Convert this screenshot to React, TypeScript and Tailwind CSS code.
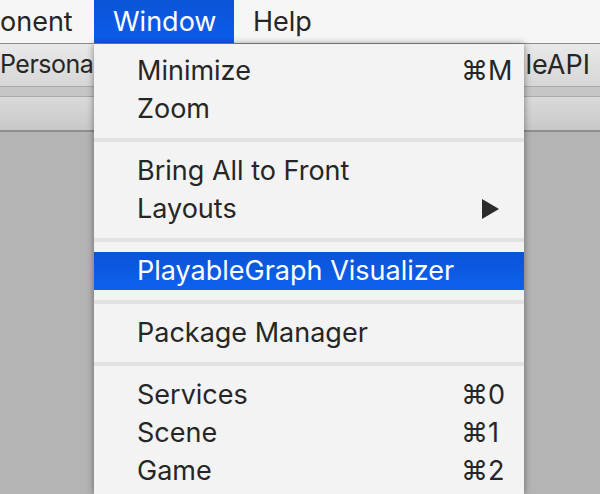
type Item =
  | { kind: "item"; label: string; shortcut?: string; submenu?: boolean; active?: boolean }
  | { kind: "sep" };

const menu: Item[] = [
  { kind: "item", label: "Minimize", shortcut: "⌘M" },
  { kind: "item", label: "Zoom" },
  { kind: "sep" },
  { kind: "item", label: "Bring All to Front" },
  { kind: "item", label: "Layouts", submenu: true },
  { kind: "sep" },
  { kind: "item", label: "PlayableGraph Visualizer", active: true },
  { kind: "sep" },
  { kind: "item", label: "Package Manager" },
  { kind: "sep" },
  { kind: "item", label: "Services", shortcut: "⌘0" },
  { kind: "item", label: "Scene", shortcut: "⌘1" },
  { kind: "item", label: "Game", shortcut: "⌘2" },
];

function MenuRow({ item }: { item: Item }) {
  if (item.kind === "sep") {
    return <div className="my-[10px] h-[4px] bg-[#e2e2e2]" />;
  }
  return (
    <div
      className={
        item.active
          ? "h-[38px] leading-[38px] flex items-center pl-[43px] pr-[15px] bg-gradient-to-b from-[#0a53d6] to-[#0e61ee] text-white"
          : "h-[38px] leading-[38px] flex items-center pl-[43px] pr-[15px]"
      }
    >
      <span className="flex-1 whitespace-nowrap">{item.label}</span>
      {item.shortcut && (
        <span className="w-[48px] whitespace-nowrap font-['Inter','DejaVu_Sans',sans-serif]">{item.shortcut}</span>
      )}
      {item.submenu && (
        <svg width="17" height="20" viewBox="0 0 17 20" className="mr-[10px]">
          <path d="M0 0 L17 10 L0 20 Z" fill="#2b2b2b" />
        </svg>
      )}
    </div>
  );
}

export default function App() {
  return (
    <div className="w-[600px] h-[494px] overflow-hidden relative flex flex-col bg-[#b4b4b4] font-['Inter',sans-serif] text-[27px] text-[#262626]">
      {/* system menu bar */}
      <div className="h-[44px] shrink-0 flex items-stretch bg-[#f6f6f6] border-b border-[#8c8c8c] leading-none">
        <span className="flex items-center w-[94px]">onent</span>
        <span className="flex items-center w-[140px] pl-[19px] bg-gradient-to-b from-[#0a54d8] to-[#0c5deb] text-white">
          Window
        </span>
        <span className="flex items-center pl-[19px]">Help</span>
      </div>

      {/* editor chrome behind the menu */}
      <div className="h-[42px] shrink-0 flex items-center justify-between bg-gradient-to-b from-[#e9e9e9] to-[#d6d6d6] leading-none">
        <span className="-mt-[2px] text-[25px] tracking-[-0.5px]">Personal</span>
        <span className="pr-[10px] -mt-[2px] whitespace-nowrap">leAPI</span>
      </div>
      <div className="h-[1px] shrink-0 bg-[#aaaaaa]" />
      <div className="h-[9px] shrink-0 bg-[#c6c6c6]" />
      <div className="h-[1px] shrink-0 bg-[#a9a9a9]" />
      <div className="h-[33px] shrink-0 bg-gradient-to-b from-[#dadada] to-[#c8c8c8]" />
      <div className="h-[2px] shrink-0 bg-[#8e8e8e]" />
      <div className="flex-1 bg-[#b4b4b4]" />

      {/* window dropdown */}
      <div className="absolute left-[94px] top-[44px] w-[430px] bottom-0 pt-[8px] bg-[#f3f3f3] shadow-[0_0_7px_rgba(0,0,0,0.45)]">
        {menu.map((item, i) => (
          <MenuRow key={i} item={item} />
        ))}
      </div>
    </div>
  );
}
